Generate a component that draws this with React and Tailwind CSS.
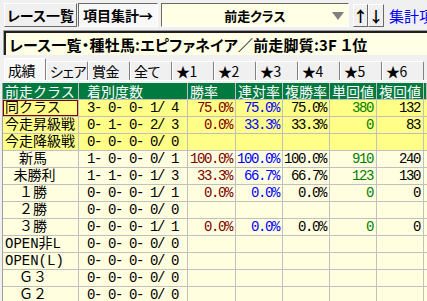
import React from 'react';

const mono = "font-['Liberation_Mono','Noto_Sans_CJK_JP',monospace]";
const jp = "font-['Noto_Sans_CJK_JP',sans-serif]";

const tabs = ['成績', 'シェア', '賞金', '全て', '★1', '★2', '★3', '★4', '★5', '★6'];
const heads = ['前走クラス', '着別度数', '勝率', '連対率', '複勝率', '単回値', '複回値', ''];
const valColors = ['text-[#800000]', 'text-[#0000ff]', 'text-black', 'text-[#008000]', 'text-black'];

const rows = [
  { label: '同クラス', rec: '3- 0- 0- 1/ 4', v: ['75.0%', '75.0%', '75.0%', '380', '132'], hl: true, sel: true },
  { label: '今走昇級戦', rec: '0- 1- 0- 2/ 3', v: ['0.0%', '33.3%', '33.3%', '0', '83'], hl: true },
  { label: '今走降級戦', rec: '0- 0- 0- 0/ 0', v: [], hl: true },
  { label: '　新馬', rec: '1- 0- 0- 0/ 1', v: ['100.0%', '100.0%', '100.0%', '910', '240'] },
  { label: ' 未勝利', rec: '1- 1- 0- 1/ 3', v: ['33.3%', '66.7%', '66.7%', '123', '130'] },
  { label: '　１勝', rec: '0- 0- 0- 1/ 1', v: ['0.0%', '0.0%', '0.0%', '0', '0'] },
  { label: '　２勝', rec: '0- 0- 0- 0/ 0', v: [] },
  { label: '　３勝', rec: '0- 0- 0- 1/ 1', v: ['0.0%', '0.0%', '0.0%', '0', '0'] },
  { label: 'OPEN非L', rec: '0- 0- 0- 0/ 0', v: [] },
  { label: 'OPEN(L)', rec: '0- 0- 0- 0/ 0', v: [] },
  { label: '　Ｇ３', rec: '0- 0- 0- 0/ 0', v: [] },
  { label: '　Ｇ２', rec: '0- 0- 0- 0/ 0', v: [] },
];

const raised = 'border border-t-white border-l-white border-b-[#696969] border-r-[#696969]';
const sunken = 'border border-t-[#696969] border-l-[#696969] border-b-white border-r-white';

export default function App() {
  return (
    <div className={`w-[427px] h-[301px] overflow-hidden bg-[#f0f0f0] text-black ${jp}`}>
      {/* top bar */}
      <div className="flex items-center h-[24px] mt-[3px] ml-[4px] whitespace-nowrap">
        <div className={`${raised} shrink-0 w-[73px] h-[24px] flex items-center justify-center text-[14px] font-bold leading-none [font-feature-settings:'palt']`}>
          レース一覧
        </div>
        <div className={`${sunken} shrink-0 ml-[1px] w-[80px] h-[24px] flex items-center justify-center text-[14px] font-bold leading-none bg-[#f8f8f8]`}>
          項目集計→
        </div>
        <div className={`${sunken} shrink-0 ml-[3px] w-[188px] h-[24px] bg-[#ffffe6] relative flex items-center justify-center`}>
          <span className="text-[13px] font-bold leading-none [font-feature-settings:'palt']">前走クラス</span>
          <svg className="absolute right-[4px] top-[8px]" width="12" height="8" viewBox="0 0 12 8">
            <path d="M0 0 H12 L6 8 Z" fill="#808080" />
          </svg>
        </div>
        <div className={`${raised} shrink-0 ml-[4px] w-[15px] h-[23px] flex items-center justify-center text-[15px] font-bold leading-none`}>↑</div>
        <div className={`${raised} shrink-0 w-[16px] h-[23px] flex items-center justify-center text-[15px] font-bold leading-none`}>↓</div>
        <div className="shrink-0 ml-[5px] text-[15px] leading-none text-[#0000ff]">集計項目</div>
      </div>

      {/* title */}
      <div className="mt-[3px] ml-[3px] h-[25px] border-t border-l border-t-[#a0a0a0] border-l-[#a0a0a0]">
        <div className="h-full border-t-2 border-l-2 border-[#202020] bg-[#ffffe6] flex items-center pl-[3px]">
          <span className="text-[15px] font-bold leading-none whitespace-nowrap tracking-[0.2px] [font-feature-settings:'palt']">
            レース一覧・種牡馬:エピファネイア／前走脚質:3F １位
          </span>
        </div>
      </div>

      {/* tabs */}
      <div className="flex items-end h-[24px] mt-[2px] ml-[4px] border-b border-white">
        {tabs.map((t, i) => (
          <div
            key={t}
            className={`shrink-0 w-[42px] ${i === 0 ? 'h-[22px] bg-[#f8f8f8]' : 'h-[19px] bg-[#f0f0f0]'} border-t border-l border-r border-t-white border-l-white border-r-[#808080] rounded-t-[2px] flex items-center pl-[3px] text-[14px] leading-none whitespace-nowrap tracking-[-0.5px] [font-feature-settings:'palt']`}
          >
            {t}
          </div>
        ))}
      </div>

      {/* table */}
      <div className={`mt-[2px] ml-[2px] border-l border-[#a0a0a0] grid grid-cols-[76px_109px_48px_47px_47px_47px_47px_1fr] text-[14px] ${mono}`}>
        {heads.map((h, i) => (
          <div
            key={i}
            className={`h-[17px] bg-[#007a3e] text-white border-r border-b border-[#c0c0c0] leading-[16px] whitespace-nowrap ${jp} ${i === 1 ? 'pl-[8px]' : 'pl-[2px]'}`}
          >
            {h}
          </div>
        ))}
        {rows.map((r) => {
          const bg = r.hl ? 'bg-[#ffff88]' : 'bg-[#ffffe0]';
          return (
            <React.Fragment key={r.label}>
              <div
                className={`h-[17px] ${bg} border-r border-b border-[#c0c0c0] leading-[16px] whitespace-pre pl-[2px] ${r.sel ? 'shadow-[inset_0_0_0_1px_#800000]' : ''}`}
              >
                {r.label}
              </div>
              <div className={`h-[17px] ${bg} border-r border-b border-[#c0c0c0] leading-[16px] whitespace-pre pl-[8px] tracking-[-1.4px]`}>
                {r.rec}
              </div>
              {[0, 1, 2, 3, 4].map((k) => (
                <div
                  key={k}
                  className={`h-[17px] ${bg} border-r border-b border-[#c0c0c0] leading-[16px] text-right pr-[3px] tracking-[-1.4px] ${valColors[k]}`}
                >
                  {r.v[k] || ''}
                </div>
              ))}
              <div className={`h-[17px] ${bg} border-b border-[#c0c0c0]`} />
            </React.Fragment>
          );
        })}
      </div>
    </div>
  );
}
